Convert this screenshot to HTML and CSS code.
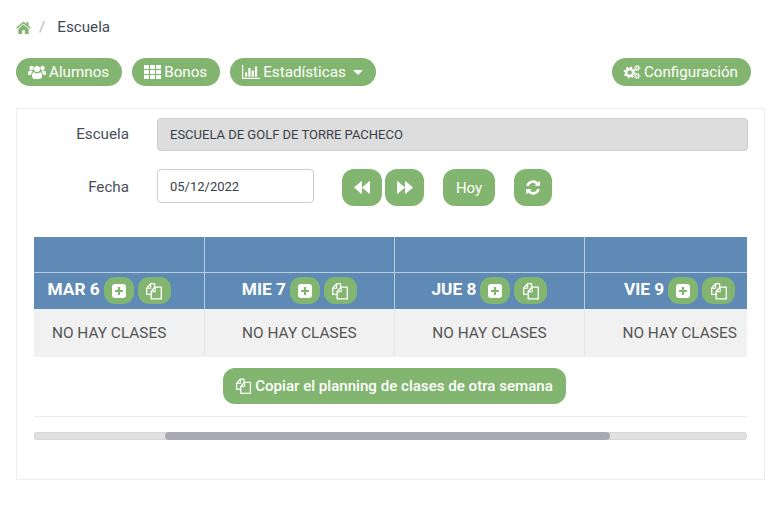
FILE: index.html
```html
<!DOCTYPE html>
<html lang="es">
	<head>
		<meta charset="UTF-8" />
		<meta name="viewport" content="width=device-width, initial-scale=1.0" />
		<title>Escuela</title>
		<link rel="stylesheet" href="styles.css">
	</head>

	<body>
		<svg class="icon-defs" aria-hidden="true">
			<symbol id="i-plus" viewBox="0 0 16 16">
				<rect x="1" y="1" width="14" height="14" rx="3" fill="#fff" />
				<path d="M8 4v8M4 8h8" stroke="#82b56f" stroke-width="2.2" />
			</symbol>
			<symbol id="i-files" viewBox="0 0 16 16">
				<path d="M5.5 11H1.5V5.5L5 1.5h3.5v3" fill="none" stroke="#fff" stroke-width="1.2" stroke-linejoin="round" />
				<path d="M1.5 5.5H5V1.5" fill="none" stroke="#fff" stroke-width="1" />
				<path d="M5.5 15V8.5L9 4.5h5.5V15z" fill="none" stroke="#fff" stroke-width="1.2" stroke-linejoin="round" />
				<path d="M5.5 8.5H9v-4" fill="none" stroke="#fff" stroke-width="1" />
			</symbol>
		</svg>

		<nav class="breadcrumb">
			<svg class="home-icon" viewBox="0 0 16 14">
				<path d="M8 0.5 0 7.2l1 1.2L8 2.6l7 5.8 1-1.2-2.6-2.2V1h-2.2v2.3z" />
				<path d="M8 3.8 2.5 8.4V14h4V10h3v4h4V8.4z" />
			</svg>
			<span class="sep">/</span>
			<span>Escuela</span>
		</nav>

		<div class="toolbar">
			<a class="pill">
				<svg class="icon" viewBox="0 0 18 14" fill="#fff">
					<circle cx="3.5" cy="3" r="2.2" />
					<circle cx="14.5" cy="3" r="2.2" />
					<circle cx="9" cy="4" r="3" />
					<path d="M0 9c0-2.5 1-3.4 2.4-3.4 1 0 1.6.6 2.2 1-1 .9-1.4 2-1.5 3.4H1C.4 10 0 9.6 0 9z" />
					<path d="M18 9c0-2.5-1-3.4-2.4-3.4-1 0-1.6.6-2.2 1 1 .9 1.4 2 1.5 3.4H17c.6 0 1-.4 1-1z" />
					<path d="M5.8 7.3C6.8 8 7.8 8.4 9 8.4s2.200-.4 3.200-1.100c1.300.2 1.800 1.600 1.800 3.800 0 1.700-1 2.900-2.400 2.900H6.400C5 14 4 12.800 4 11.100c0-2.200.5-3.600 1.800-3.800z" />
				</svg>
				Alumnos
			</a>
			<a class="pill">
				<svg class="icon icon-grid" viewBox="0 0 16 13" fill="#fff">
					<path d="M0 0h4.600v3.600H0zM5.700 0h4.600v3.600H5.700zM11.400 0H16v3.600h-4.600zM0 4.700h4.600v3.600H0zM5.700 4.700h4.600v3.600H5.700zM11.400 4.700H16v3.600h-4.600zM0 9.400h4.600V13H0zM5.700 9.400h4.600V13H5.700zM11.400 9.400H16V13h-4.600z" />
				</svg>
				Bonos
			</a>
			<a class="pill">
				<svg class="icon" viewBox="0 0 18 14" fill="#fff">
					<path d="M0 0h1.200v12.800H18V14H0z" />
					<path d="M3 7.500h2.200v4.300H3zM6.300 3h2.200v8.800H6.300zM9.600 5.500h2.200v6.300H9.600zM12.900 1.500h2.200v10.300h-2.200z" />
				</svg>
				Estadísticas
				<span class="caret"></span>
			</a>
			<a class="pill pill-right">
				<svg class="icon" viewBox="0 0 18 15">
					<circle cx="6.500" cy="8" r="3.800" fill="none" stroke="#fff" stroke-width="2.600" />
					<circle cx="6.500" cy="8" r="5.600" fill="none" stroke="#fff" stroke-width="1.800" stroke-dasharray="2 2.400" />
					<circle cx="14.500" cy="3.200" r="1.700" fill="none" stroke="#fff" stroke-width="1.300" />
					<circle cx="14.500" cy="3.200" r="2.900" fill="none" stroke="#fff" stroke-width="1" stroke-dasharray="1.200 1.100" />
					<circle cx="14.500" cy="11.800" r="1.700" fill="none" stroke="#fff" stroke-width="1.300" />
					<circle cx="14.500" cy="11.800" r="2.900" fill="none" stroke="#fff" stroke-width="1" stroke-dasharray="1.200 1.100" />
				</svg>
				Configuración
			</a>
		</div>

		<div class="card">
			<div class="form-row">
				<label>Escuela</label>
				<input class="school-input" type="text" value="ESCUELA DE GOLF DE TORRE PACHECO" disabled />
			</div>
			<div class="form-row date-row">
				<label>Fecha</label>
				<input class="date-input" type="text" value="05/12/2022" />
				<div class="week-nav">
					<button class="btn btn-prev">
						<svg class="nav-icon" viewBox="0 0 14 12" fill="#fff"><path d="M7 0v12L0 6zM14 0v12L7 6z" /></svg>
					</button>
					<button class="btn btn-next">
						<svg class="nav-icon" viewBox="0 0 14 12" fill="#fff"><path d="M0 0v12l7-6zM7 0v12l7-6z" /></svg>
					</button>
				</div>
				<button class="btn btn-today">Hoy</button>
				<button class="btn btn-reload">
					<svg class="nav-icon" viewBox="0 0 14 14" fill="none" stroke="#fff" stroke-width="2.400">
						<path d="M1.800 5.600A5.400 5.400 0 0 1 11 3.300" />
						<path d="M12.200 8.400A5.400 5.400 0 0 1 3 10.700" />
						<path d="M13.400 0.500v5.200H8.200z" fill="#fff" stroke="none" />
						<path d="M0.600 13.500V8.300h5.200z" fill="#fff" stroke="none" />
					</svg>
				</button>
			</div>

			<div class="table-scroll">
				<table class="planning">
					<thead>
						<tr class="empty-row">
							<th></th>
							<th></th>
							<th></th>
							<th></th>
						</tr>
						<tr class="day-row">
							<th>
								<div class="day"><span class="day-name">MAR 6</span>
									<button class="mini mini-add"><svg viewBox="0 0 16 16"><use href="#i-plus" /></svg></button>
									<button class="mini mini-copy"><svg viewBox="0 0 16 16"><use href="#i-files" /></svg></button>
								</div>
							</th>
							<th>
								<div class="day"><span class="day-name">MIE 7</span>
									<button class="mini mini-add"><svg viewBox="0 0 16 16"><use href="#i-plus" /></svg></button>
									<button class="mini mini-copy"><svg viewBox="0 0 16 16"><use href="#i-files" /></svg></button>
								</div>
							</th>
							<th>
								<div class="day"><span class="day-name">JUE 8</span>
									<button class="mini mini-add"><svg viewBox="0 0 16 16"><use href="#i-plus" /></svg></button>
									<button class="mini mini-copy"><svg viewBox="0 0 16 16"><use href="#i-files" /></svg></button>
								</div>
							</th>
							<th>
								<div class="day"><span class="day-name">VIE 9</span>
									<button class="mini mini-add"><svg viewBox="0 0 16 16"><use href="#i-plus" /></svg></button>
									<button class="mini mini-copy"><svg viewBox="0 0 16 16"><use href="#i-files" /></svg></button>
								</div>
							</th>
						</tr>
					</thead>
					<tbody>
						<tr>
							<td>NO HAY CLASES</td>
							<td>NO HAY CLASES</td>
							<td>NO HAY CLASES</td>
							<td>NO HAY CLASES</td>
						</tr>
					</tbody>
				</table>
			</div>

			<div class="copy-wrap">
				<button class="copy-btn">
					<svg class="copy-icon" viewBox="0 0 16 16"><use href="#i-files" /></svg>
					Copiar el planning de clases de otra semana
				</button>
			</div>
			<hr class="divider" />
			<div class="scroll-track">
				<div class="scroll-thumb"></div>
			</div>
		</div>
	</body>
</html>
```

FILE: styles.css
```css
body {
	margin: 0;
	padding: 16px 15px 0 16px;
	font-family: Roboto, "Liberation Sans", sans-serif;
	font-size: 15.2px;
	color: #495057;
	background-color: #fff;
}
.icon-defs {
	display: none;
}
.breadcrumb {
	display: flex;
	align-items: center;
	height: 22px;
	margin-bottom: 20px;
	color: #3f4a56;
}
.home-icon {
	width: 15px;
	height: 13px;
	fill: #82b56f;
}
.sep {
	margin: 0 12px 0 8px;
	color: #b4b9bf;
}
.toolbar {
	display: flex;
	gap: 10px;
	margin-bottom: 22px;
	padding-right: 14px;
}
.pill {
	display: flex;
	align-items: center;
	gap: 3px;
	height: 28px;
	padding: 0 13px 0 12px;
	border-radius: 14px;
	background-color: #82b56f;
	color: #fff;
	font-size: 15.2px;
}
.pill-right {
	margin-left: auto;
	padding-left: 11px;
}
.icon {
	width: 18px;
	height: 14px;
}
.icon-grid {
	width: 17px;
}
.caret {
	width: 0;
	height: 0;
	margin-left: 4px;
	border-top: 5px solid #fff;
	border-left: 5px solid transparent;
	border-right: 5px solid transparent;
}
.card {
	height: 372px;
	box-sizing: border-box;
	padding: 9px 17px;
	border: 1px solid #eeeef2;
}
.form-row {
	display: flex;
	align-items: flex-start;
	gap: 28px;
	margin-bottom: 18px;
}
.form-row label {
	width: 95px;
	line-height: 33px;
	text-align: right;
	color: #495057;
}
.school-input,
.date-input {
	box-sizing: border-box;
	height: 33px;
	padding: 0 12px;
	border: 1px solid #ccc;
	border-radius: 4px;
	font-family: inherit;
	font-size: 13px;
	color: #3a4148;
}
.school-input {
	flex: 1;
	margin-right: -1px;
	background-color: #ddd;
}
.date-input {
	width: 157px;
	height: 34px;
	margin-right: 9px;
	background-color: #fff;
}
.date-row {
	gap: 19px;
	margin-bottom: 31px;
}
.date-row label {
	margin-right: 9px;
	line-height: 37px;
}
.week-nav {
	display: flex;
	gap: 3px;
}
.btn {
	display: flex;
	align-items: center;
	justify-content: center;
	height: 37px;
	padding: 0;
	border: none;
	border-radius: 12px;
	background-color: #82b56f;
	color: #fff;
	font-family: inherit;
	font-size: 15px;
}
.btn-prev {
	width: 40px;
}
.btn-next {
	width: 39px;
}
.btn-today {
	width: 52px;
}
.btn-reload {
	width: 38px;
}
.nav-icon {
	width: 16px;
	height: 15px;
}
.table-scroll {
	overflow: hidden;
}
.planning {
	width: 761.6px;
	margin-left: -20.4px;
	border-collapse: collapse;
	table-layout: fixed;
}
.planning th {
	padding: 0;
	border: 1px solid #b9cde0;
	border-top: none;
	background-color: #5f8ab5;
	color: #fff;
}
.empty-row th {
	height: 35px;
}
.day-row th {
	height: 36px;
	border-bottom: none;
}
.day {
	display: flex;
	align-items: center;
	justify-content: center;
	gap: 4px;
	padding-bottom: 1px;
	font-size: 17.3px;
	font-weight: 700;
}
.day-name {
	margin-bottom: 3px;
}
.mini {
	display: flex;
	align-items: center;
	justify-content: center;
	height: 27px;
	padding: 0;
	border: none;
	border-radius: 11px;
	background-color: #82b56f;
}
.mini svg {
	width: 18px;
	height: 18px;
}
.mini-add svg {
	width: 16px;
	height: 16px;
}
.mini-add {
	width: 30px;
}
.mini-copy {
	width: 33px;
}
.planning td {
	height: 48px;
	padding: 0;
	border-right: 1px solid #e8e8e8;
	border-left: 1px solid #e8e8e8;
	background-color: #f1f1f1;
	text-align: center;
	font-size: 15.4px;
	color: #555;
}
.copy-wrap {
	display: flex;
	justify-content: center;
	margin-top: 11px;
	padding-left: 8px;
}
.copy-btn {
	display: flex;
	align-items: center;
	gap: 3px;
	height: 36px;
	padding: 0 13px 0 12px;
	border: none;
	border-radius: 12px;
	background-color: #82b56f;
	color: #fff;
	font-family: inherit;
	font-size: 15.1px;
	font-weight: 500;
}
.copy-icon {
	width: 17px;
	height: 18px;
}
.divider {
	height: 1px;
	margin: 12px 0 15px;
	border: none;
	background-color: #ececf0;
}
.scroll-track {
	height: 8px;
	border-radius: 4px;
	background-color: #e2e2e2;
	box-shadow: inset 0 0 2px #bbb;
}
.scroll-thumb {
	width: 445px;
	height: 8px;
	margin-left: 131px;
	border-radius: 4px;
	background-color: #a9a9b5;
}
```
